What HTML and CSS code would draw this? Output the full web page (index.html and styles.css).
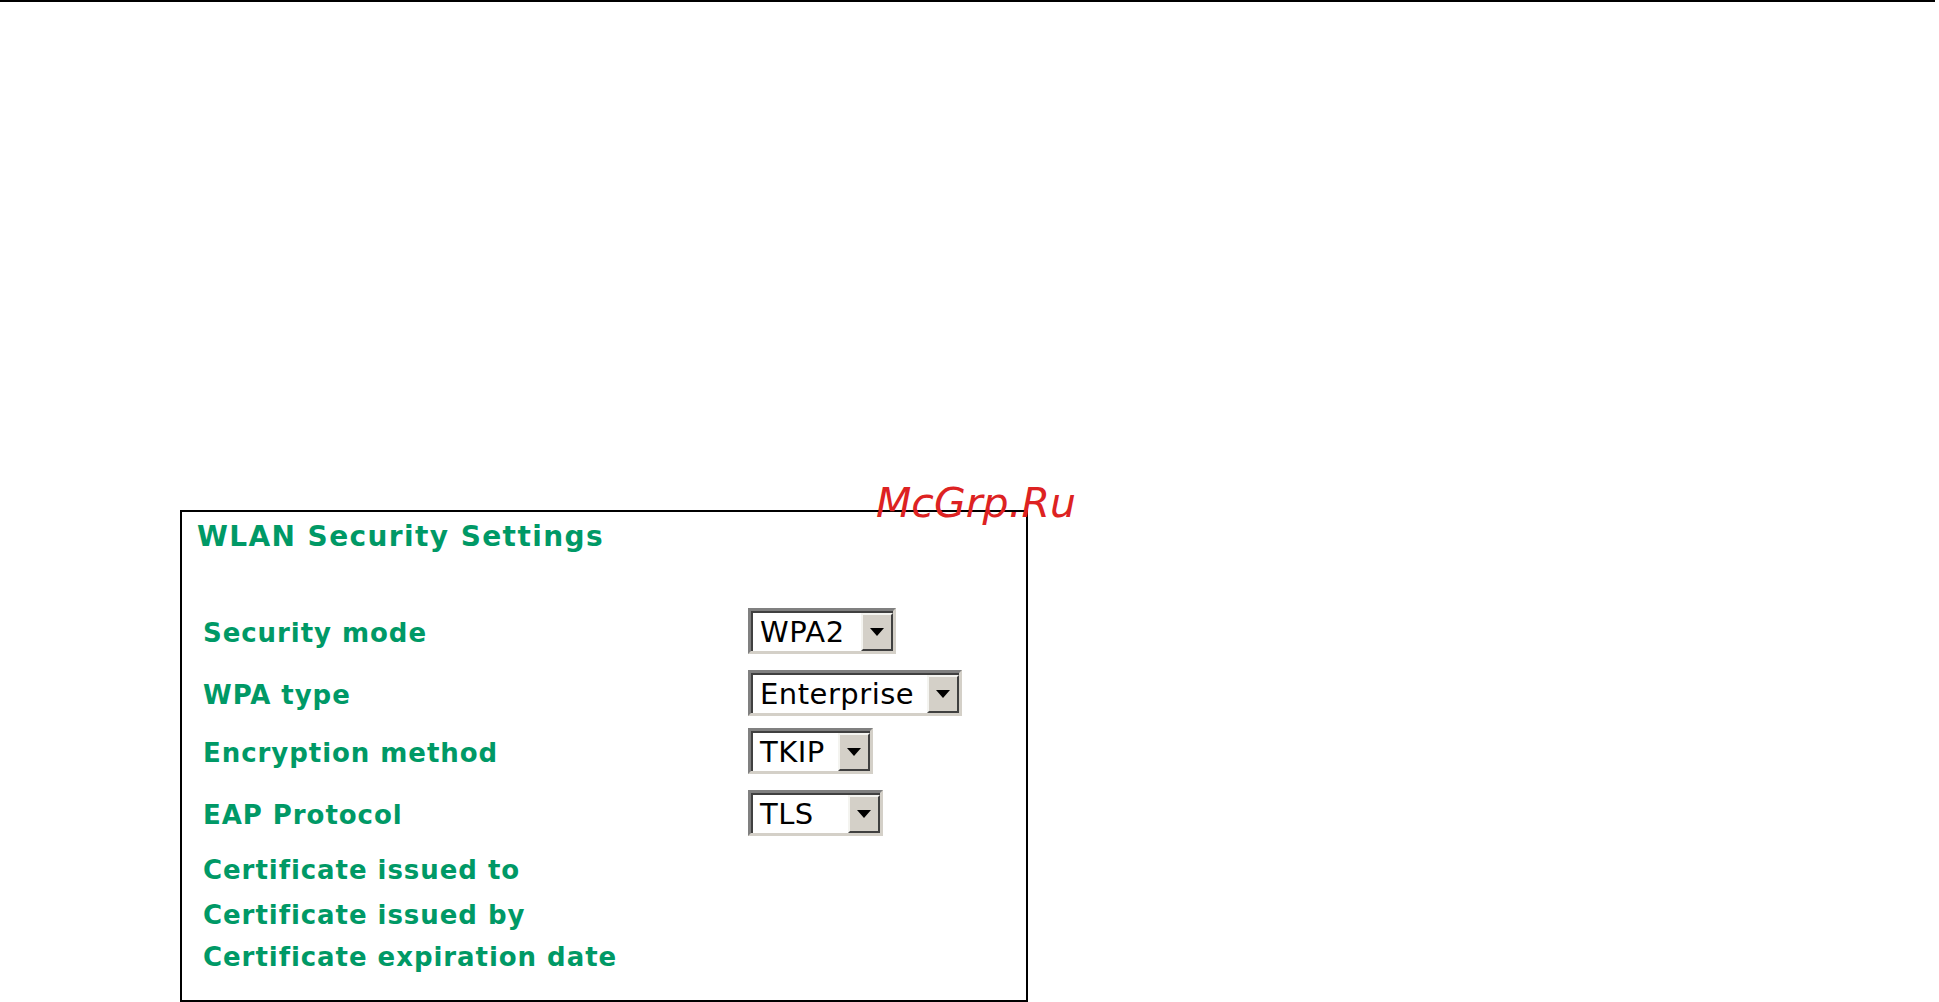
FILE: index.html
```html
<!DOCTYPE html>
<html>
<head>
<meta charset="utf-8">
<title>WLAN Security Settings</title>
<link rel="stylesheet" href="styles.css">
</head>
<body>
<div class="top-rule"></div>
<div class="panel">
  <div class="title">WLAN Security Settings</div>
  <div class="form">
    <div class="label">Security mode</div>
    <div class="field"><div class="sel w-wpa2"><span class="val">WPA2</span><span class="btn"><span class="tri"></span></span></div></div>
    <div class="label">WPA type</div>
    <div class="field"><div class="sel w-ent"><span class="val">Enterprise</span><span class="btn"><span class="tri"></span></span></div></div>
    <div class="label">Encryption method</div>
    <div class="field"><div class="sel w-tkip"><span class="val">TKIP</span><span class="btn"><span class="tri"></span></span></div></div>
    <div class="label">EAP Protocol</div>
    <div class="field"><div class="sel w-tls"><span class="val">TLS</span><span class="btn"><span class="tri"></span></span></div></div>
    <div class="label">Certificate issued to</div>
    <div class="field"></div>
    <div class="label">Certificate issued by</div>
    <div class="field"></div>
    <div class="label">Certificate expiration date</div>
    <div class="field"></div>
  </div>
  <div class="watermark">McGrp.Ru</div>
</div>
</body>
</html>
```

FILE: styles.css
```css
html, body {
  margin: 0;
  padding: 0;
  background: #ffffff;
}
body {
  width: 1939px;
  height: 1002px;
  overflow: hidden;
  font-family: "DejaVu Sans", Verdana, sans-serif;
}
.top-rule {
  width: 1935px;
  height: 2px;
  background: #000000;
}
.panel {
  position: relative;
  box-sizing: border-box;
  margin: 508px 0 0 180px;
  width: 848px;
  height: 492px;
  border: 2px solid #000000;
  padding: 10px 0 0 15px;
}
.title {
  height: 30px;
  line-height: 30px;
  font-size: 28px;
  font-weight: bold;
  letter-spacing: 1.4px;
  color: #009966;
  white-space: nowrap;
}
.form {
  margin-top: 50px;
  margin-left: 6px;
  display: grid;
  grid-template-columns: 545px auto;
  grid-template-rows: 62px 62px 54px 70px 40px 50px 34px;
  align-items: center;
}
.label {
  font-size: 26px;
  line-height: 30px;
  font-weight: bold;
  letter-spacing: 0.95px;
  color: #009966;
  white-space: nowrap;
}
.field {
  display: flex;
  align-items: center;
}
.sel {
  box-sizing: border-box;
  display: flex;
  align-items: stretch;
  height: 46px;
  margin-bottom: 4px;
  border: 3px solid;
  border-color: #808080 #d4d0c8 #d4d0c8 #808080;
  box-shadow: inset 2px 2px 0 #404040;
  background: #ffffff;
}
.w-wpa2 { width: 148px; }
.w-ent { width: 214px; }
.w-tkip { width: 125px; }
.w-tls { width: 135px; }
.val {
  padding: 0 0 0 9px;
  font-size: 29px;
  letter-spacing: 0.5px;
  line-height: 42px;
  color: #000000;
  white-space: nowrap;
}
.btn {
  box-sizing: border-box;
  margin: 2px 0 0 auto;
  width: 32px;
  height: 38px;
  background: #d4d0c8;
  border: 2px solid;
  border-color: #f4f4f0 #404040 #404040 #f4f4f0;
  display: flex;
  align-items: center;
  justify-content: center;
}
.tri {
  width: 0;
  height: 0;
  border-left: 7px solid transparent;
  border-right: 7px solid transparent;
  border-top: 8px solid #000000;
}
.watermark {
  position: absolute;
  left: 694px;
  top: -33px;
  font-size: 41px;
  font-style: italic;
  line-height: 48px;
  color: #dd2222;
  white-space: nowrap;
}
```
